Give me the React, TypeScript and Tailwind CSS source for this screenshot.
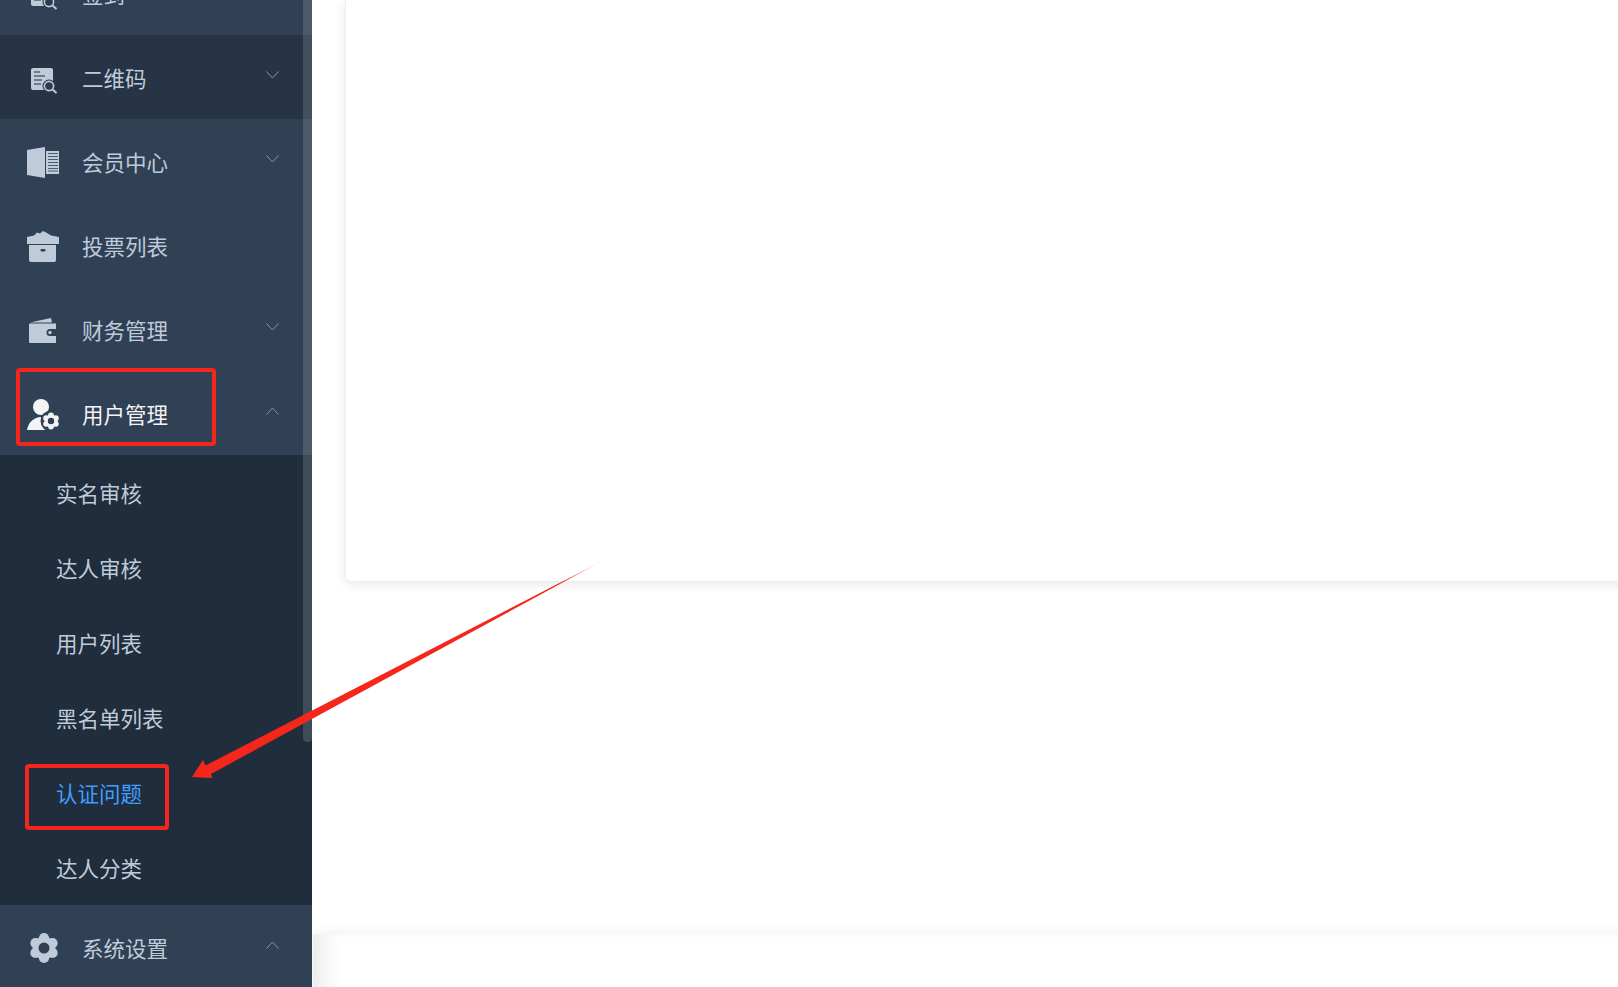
type IconName = "doc" | "book" | "box" | "wallet" | "person" | "gear";

interface MenuRow {
  label: string;
  icon: IconName;
  arrow?: "up" | "down";
  hovered?: boolean;
  active?: boolean;
}

const topRows: MenuRow[] = [
  { label: "签到", icon: "doc" },
  { label: "二维码", icon: "doc", arrow: "down", hovered: true },
  { label: "会员中心", icon: "book", arrow: "down" },
  { label: "投票列表", icon: "box" },
  { label: "财务管理", icon: "wallet", arrow: "down" },
  { label: "用户管理", icon: "person", arrow: "up", active: true },
];

const subRows = ["实名审核", "达人审核", "用户列表", "黑名单列表", "认证问题", "达人分类"];

function Gear({ cx, cy, r, hole, fill, holeFill }: { cx: number; cy: number; r: number; hole: number; fill: string; holeFill: string }) {
  return (
    <g>
      <circle cx={cx} cy={cy} r={r * 0.76} fill={fill} />
      {[90, 30, -30, -90, -150, 150].map((a) => (
        <circle
          key={a}
          cx={cx + Math.cos((a * Math.PI) / 180) * r * 0.66}
          cy={cy - Math.sin((a * Math.PI) / 180) * r * 0.66}
          r={r * 0.34}
          fill={fill}
        />
      ))}
      <circle cx={cx} cy={cy} r={hole} fill={holeFill} />
    </g>
  );
}

function MenuIcon({ name }: { name: IconName }) {
  const c = "#bfcbd9";
  const dark = "#304156";
  return (
    <svg viewBox="0 0 32 32" className="w-8 h-8 shrink-0 overflow-visible">
      {name === "doc" && (
        <g>
          <rect x="4" y="7" width="22" height="22" rx="2" fill={c} />
          <path d="M7 11h6M7 15h11M7 19h8M7 23h7" stroke="#526478" strokeWidth="1.4" />
          <circle cx="22" cy="25" r="6.5" fill="#2c3b4e" />
          <circle cx="22" cy="25" r="4.6" fill="none" stroke={c} strokeWidth="1.6" />
          <path d="M25.5 28.5l4 3.5" stroke={c} strokeWidth="2" />
        </g>
      )}
      {name === "book" && (
        <g>
          <path d="M0 5L18 2V33L0 30Z" fill={c} />
          <rect x="19" y="6" width="13" height="23" fill={c} />
          <path d="M21 8.5h10M21 11.5h10M21 14.5h10M21 17.5h10M21 20.5h10M21 23.5h10M21 26h10" stroke="#4a5c71" strokeWidth="1.2" />
        </g>
      )}
      {name === "box" && (
        <g>
          <path d="M0 8L7 6.5L10 3.5L13 4.5L16 2L20 4L24 6.5L32 8V15H0Z" fill={c} />
          <path d="M2 16H29V31a2 2 0 0 1-2 2H4a2 2 0 0 1-2-2Z" fill={c} />
          <rect x="13.5" y="20" width="5" height="2.5" rx="1" fill={dark} />
        </g>
      )}
      {name === "wallet" && (
        <g>
          <path d="M3 9.5L24 5L25 9.5Z" fill={c} />
          <path d="M3 10.5H29V16H23a3.5 3.5 0 0 0 0 7H29V30H3a1 1 0 0 1-1-1V11.5a1 1 0 0 1 1-1Z" fill={c} />
          <circle cx="23" cy="19.5" r="1.7" fill={c} />
        </g>
      )}
      {name === "person" && (
        <g>
          <circle cx="14" cy="10" r="8" fill="#f4f4f5" />
          <path d="M0 33C1 26 6 21 13 20L18 21V33Z" fill="#f4f4f5" />
          <circle cx="24" cy="24" r="10.5" fill={dark} />
          <Gear cx={24} cy={24} r={8.5} hole={3.2} fill="#f4f4f5" holeFill={dark} />
        </g>
      )}
      {name === "gear" && <Gear cx={17} cy={17} r={15} hole={5.5} fill={c} holeFill={dark} />}
    </svg>
  );
}

function Arrow({ dir }: { dir: "up" | "down" }) {
  return (
    <svg viewBox="0 0 13 8" className="w-[13px] h-2 -mt-1 shrink-0">
      <path
        d={dir === "down" ? "M0.5 0.5L6.5 7L12.5 0.5" : "M0.5 7.5L6.5 1L12.5 7.5"}
        fill="none"
        stroke="#8a96a3"
        strokeWidth="1"
      />
    </svg>
  );
}

function Row({ row }: { row: MenuRow }) {
  return (
    <div className={`h-[84px] flex items-center pl-[27px] pr-[33px] ${row.hovered ? "bg-[#263445]" : "bg-[#304156]"}`}>
      <MenuIcon name={row.icon} />
      <span className={`ml-[23px] pt-[2px] flex-1 text-[21.5px] ${row.active ? "text-[#f4f4f5]" : "text-[#bfcbd9]"}`}>{row.label}</span>
      {row.arrow && <Arrow dir={row.arrow} />}
    </div>
  );
}

export default function App() {
  return (
    <div className="relative flex h-screen overflow-hidden bg-white font-['Noto_Sans_CJK_SC',sans-serif]">
      <aside className="relative w-[312px] shrink-0 bg-[#304156]">
        <div className="-mt-[49px]">
          {topRows.map((r) => (
            <Row key={r.label} row={r} />
          ))}
        </div>
        <div className="bg-[#1f2d3d]">
          {subRows.map((s) => (
            <div
              key={s}
              className={`h-[75px] flex items-center pl-[56px] pt-[2px] text-[21.5px] ${s === "认证问题" ? "text-[#409eff]" : "text-[#bfcbd9]"}`}
            >
              {s}
            </div>
          ))}
        </div>
        <Row row={{ label: "系统设置", icon: "gear", arrow: "up" }} />
        {/* scrollbar thumb */}
        <div className="absolute right-0 top-0 w-[9px] h-[742px] rounded-b bg-[rgba(144,147,153,0.3)]" />
      </aside>

      <main className="flex-1 min-w-0">
        <div className="ml-[33px] -mr-5 h-[582px] rounded-b-md border border-t-0 border-[#ebeef5] bg-white shadow-[0_2px_12px_0_rgba(0,0,0,0.1)]" />
        <div className="ml-px -mr-5 mt-[352px] h-[60px] bg-white shadow-[0_-2px_12px_0_rgba(0,0,0,0.06),inset_22px_0_20px_-10px_rgba(0,0,0,0.08)]" />
      </main>

      {/* red annotations on top of the screenshot */}
      <div className="absolute left-4 top-[368px] w-[200px] h-[78px] rounded-[4px] border-4 border-[#f5261b]" />
      <div className="absolute left-[25px] top-[764px] w-[144px] h-[66px] rounded-[4px] border-4 border-[#f5261b]" />
      <svg className="absolute inset-0 w-full h-full pointer-events-none" viewBox="0 0 1618 987">
        <defs>
          <linearGradient id="arrowFade" gradientUnits="userSpaceOnUse" x1="604" y1="560" x2="560" y2="583">
            <stop offset="0" stopColor="#f5261b" stopOpacity="0" />
            <stop offset="1" stopColor="#f5261b" stopOpacity="1" />
          </linearGradient>
        </defs>
        <path d="M192 777L203 760L205.5 765.5L606 559L211 774L212 778Z" fill="url(#arrowFade)" />
      </svg>
    </div>
  );
}
